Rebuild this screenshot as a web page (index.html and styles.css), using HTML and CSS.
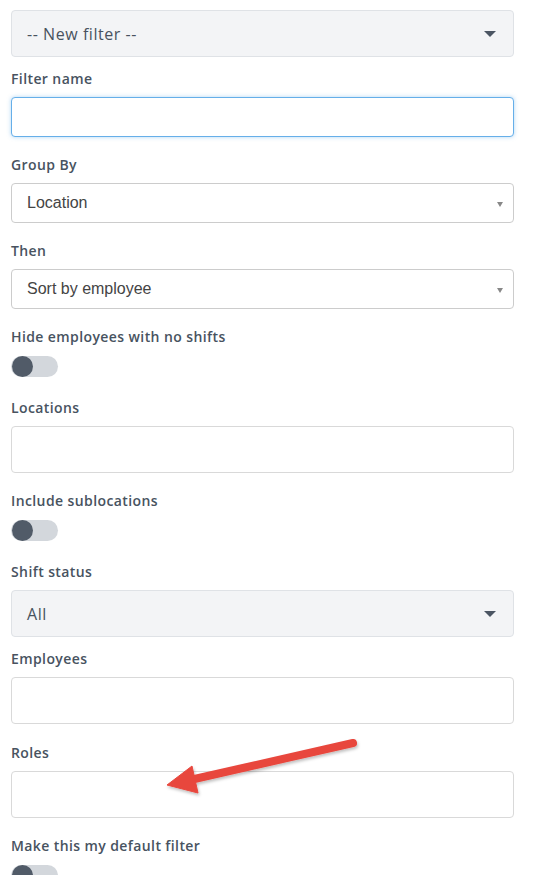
FILE: index.html
```html
<!DOCTYPE html>
<html>
<head>
<meta charset="utf-8">
<link rel="stylesheet" href="styles.css">
</head>
<body>
<form class="filter-form">
  <div class="gray-select first">
    <span class="gs-text">-- New filter --</span>
    <span class="caret-big"></span>
  </div>

  <div class="field">
    <div class="label">Filter name</div>
    <div class="text-input focused"></div>
  </div>

  <div class="field">
    <div class="label">Group By</div>
    <div class="native-select"><span>Location</span><span class="caret-small"></span></div>
  </div>

  <div class="field">
    <div class="label">Then</div>
    <div class="native-select"><span>Sort by employee</span><span class="caret-small"></span></div>
  </div>

  <div class="field">
    <div class="label">Hide employees with no shifts</div>
    <div class="toggle"><span class="knob"></span></div>
  </div>

  <div class="field">
    <div class="label">Locations</div>
    <div class="multi-input"></div>
  </div>

  <div class="field">
    <div class="label">Include sublocations</div>
    <div class="toggle"><span class="knob"></span></div>
  </div>

  <div class="field">
    <div class="label">Shift status</div>
    <div class="gray-select">
      <span class="gs-text">All</span>
      <span class="caret-big"></span>
    </div>
  </div>

  <div class="field after-gray">
    <div class="label">Employees</div>
    <div class="multi-input"></div>
  </div>

  <div class="field roles">
    <div class="label">Roles</div>
    <div class="multi-input"></div>
  </div>

  <div class="field">
    <div class="label">Make this my default filter</div>
    <div class="toggle"><span class="knob"></span></div>
  </div>
</form>

<svg class="annotation" width="554" height="875" viewBox="0 0 554 875">
  <defs>
    <filter id="sh" x="-10%" y="-30%" width="120%" height="160%">
      <feDropShadow dx="1" dy="2" stdDeviation="1.5" flood-color="#000" flood-opacity="0.25"/>
    </filter>
  </defs>
  <g filter="url(#sh)" fill="#e8473e" stroke="#e8473e">
    <line x1="353" y1="743" x2="190" y2="780" stroke-width="8" stroke-linecap="round"/>
    <polygon points="167,785 192,766 198,793" stroke-width="1" stroke-linejoin="round"/>
  </g>
</svg>
</body>
</html>
```

FILE: styles.css
```css
html, body {
  margin: 0;
  padding: 0;
  background: #ffffff;
}

body {
  position: relative;
  width: 554px;
  height: 875px;
  overflow: hidden;
  font-family: "Open Sans", Lato, sans-serif;
}

.filter-form {
  width: 503px;
  margin: 0 0 0 11px;
  padding-top: 10px;
  display: flex;
  flex-direction: column;
}

.field {
  display: flex;
  flex-direction: column;
  margin-top: 18px;
}

.gray-select.first + .field {
  margin-top: 12px;
}

.field.after-gray {
  margin-top: 12px;
}

.field.roles {
  margin-top: 19px;
}

.label {
  font-family: "Open Sans", Lato, sans-serif;
  font-size: 14px;
  font-weight: 600;
  line-height: 20px;
  color: #48535f;
  margin-bottom: 8px;
  letter-spacing: 0.4px;
}

.gray-select {
  box-sizing: border-box;
  height: 47px;
  background: #f3f4f6;
  border: 1px solid #dfe2e6;
  border-radius: 4px;
  display: flex;
  align-items: center;
  justify-content: space-between;
  padding: 0 17px 0 15px;
}

.gs-text {
  font-family: "Open Sans", Lato, sans-serif;
  font-size: 16px;
  color: #48525e;
  letter-spacing: 0.55px;
}

.caret-big {
  width: 0;
  height: 0;
  border-left: 6.5px solid transparent;
  border-right: 6.5px solid transparent;
  border-top: 6px solid #4b5563;
  margin-top: 1px;
}

.text-input {
  box-sizing: border-box;
  height: 40px;
  border: 1px solid #ccc;
  border-radius: 4px;
  background: #fff;
}

.text-input.focused {
  border-color: #66afe9;
  box-shadow: 0 0 4px rgba(102, 175, 233, 0.5);
}

.native-select {
  box-sizing: border-box;
  height: 40px;
  border: 1px solid #cccccc;
  border-radius: 4px;
  background: #fff;
  display: flex;
  align-items: center;
  justify-content: space-between;
  padding: 0 10px 0 15px;
  font-family: "Liberation Sans", Arial, sans-serif;
  font-size: 16px;
  color: #444;
}

.caret-small {
  width: 0;
  height: 0;
  border-left: 3.5px solid transparent;
  border-right: 3.5px solid transparent;
  border-top: 5px solid #888;
  margin-top: 2px;
}

.multi-input {
  box-sizing: border-box;
  height: 47px;
  border: 1px solid #d9d9d9;
  border-radius: 4px;
  background: #fff;
}

.toggle {
  position: relative;
  box-sizing: border-box;
  width: 48px;
  height: 25px;
  padding-top: 1px;
}

.toggle::before {
  content: "";
  display: block;
  width: 47px;
  height: 21px;
  background: #d3d7dc;
  border-radius: 11px;
}

.knob {
  position: absolute;
  left: 1px;
  top: 1px;
  width: 21px;
  height: 21px;
  border-radius: 50%;
  background: #515b68;
}

.annotation {
  position: absolute;
  left: 0;
  top: 0;
  pointer-events: none;
}
```
